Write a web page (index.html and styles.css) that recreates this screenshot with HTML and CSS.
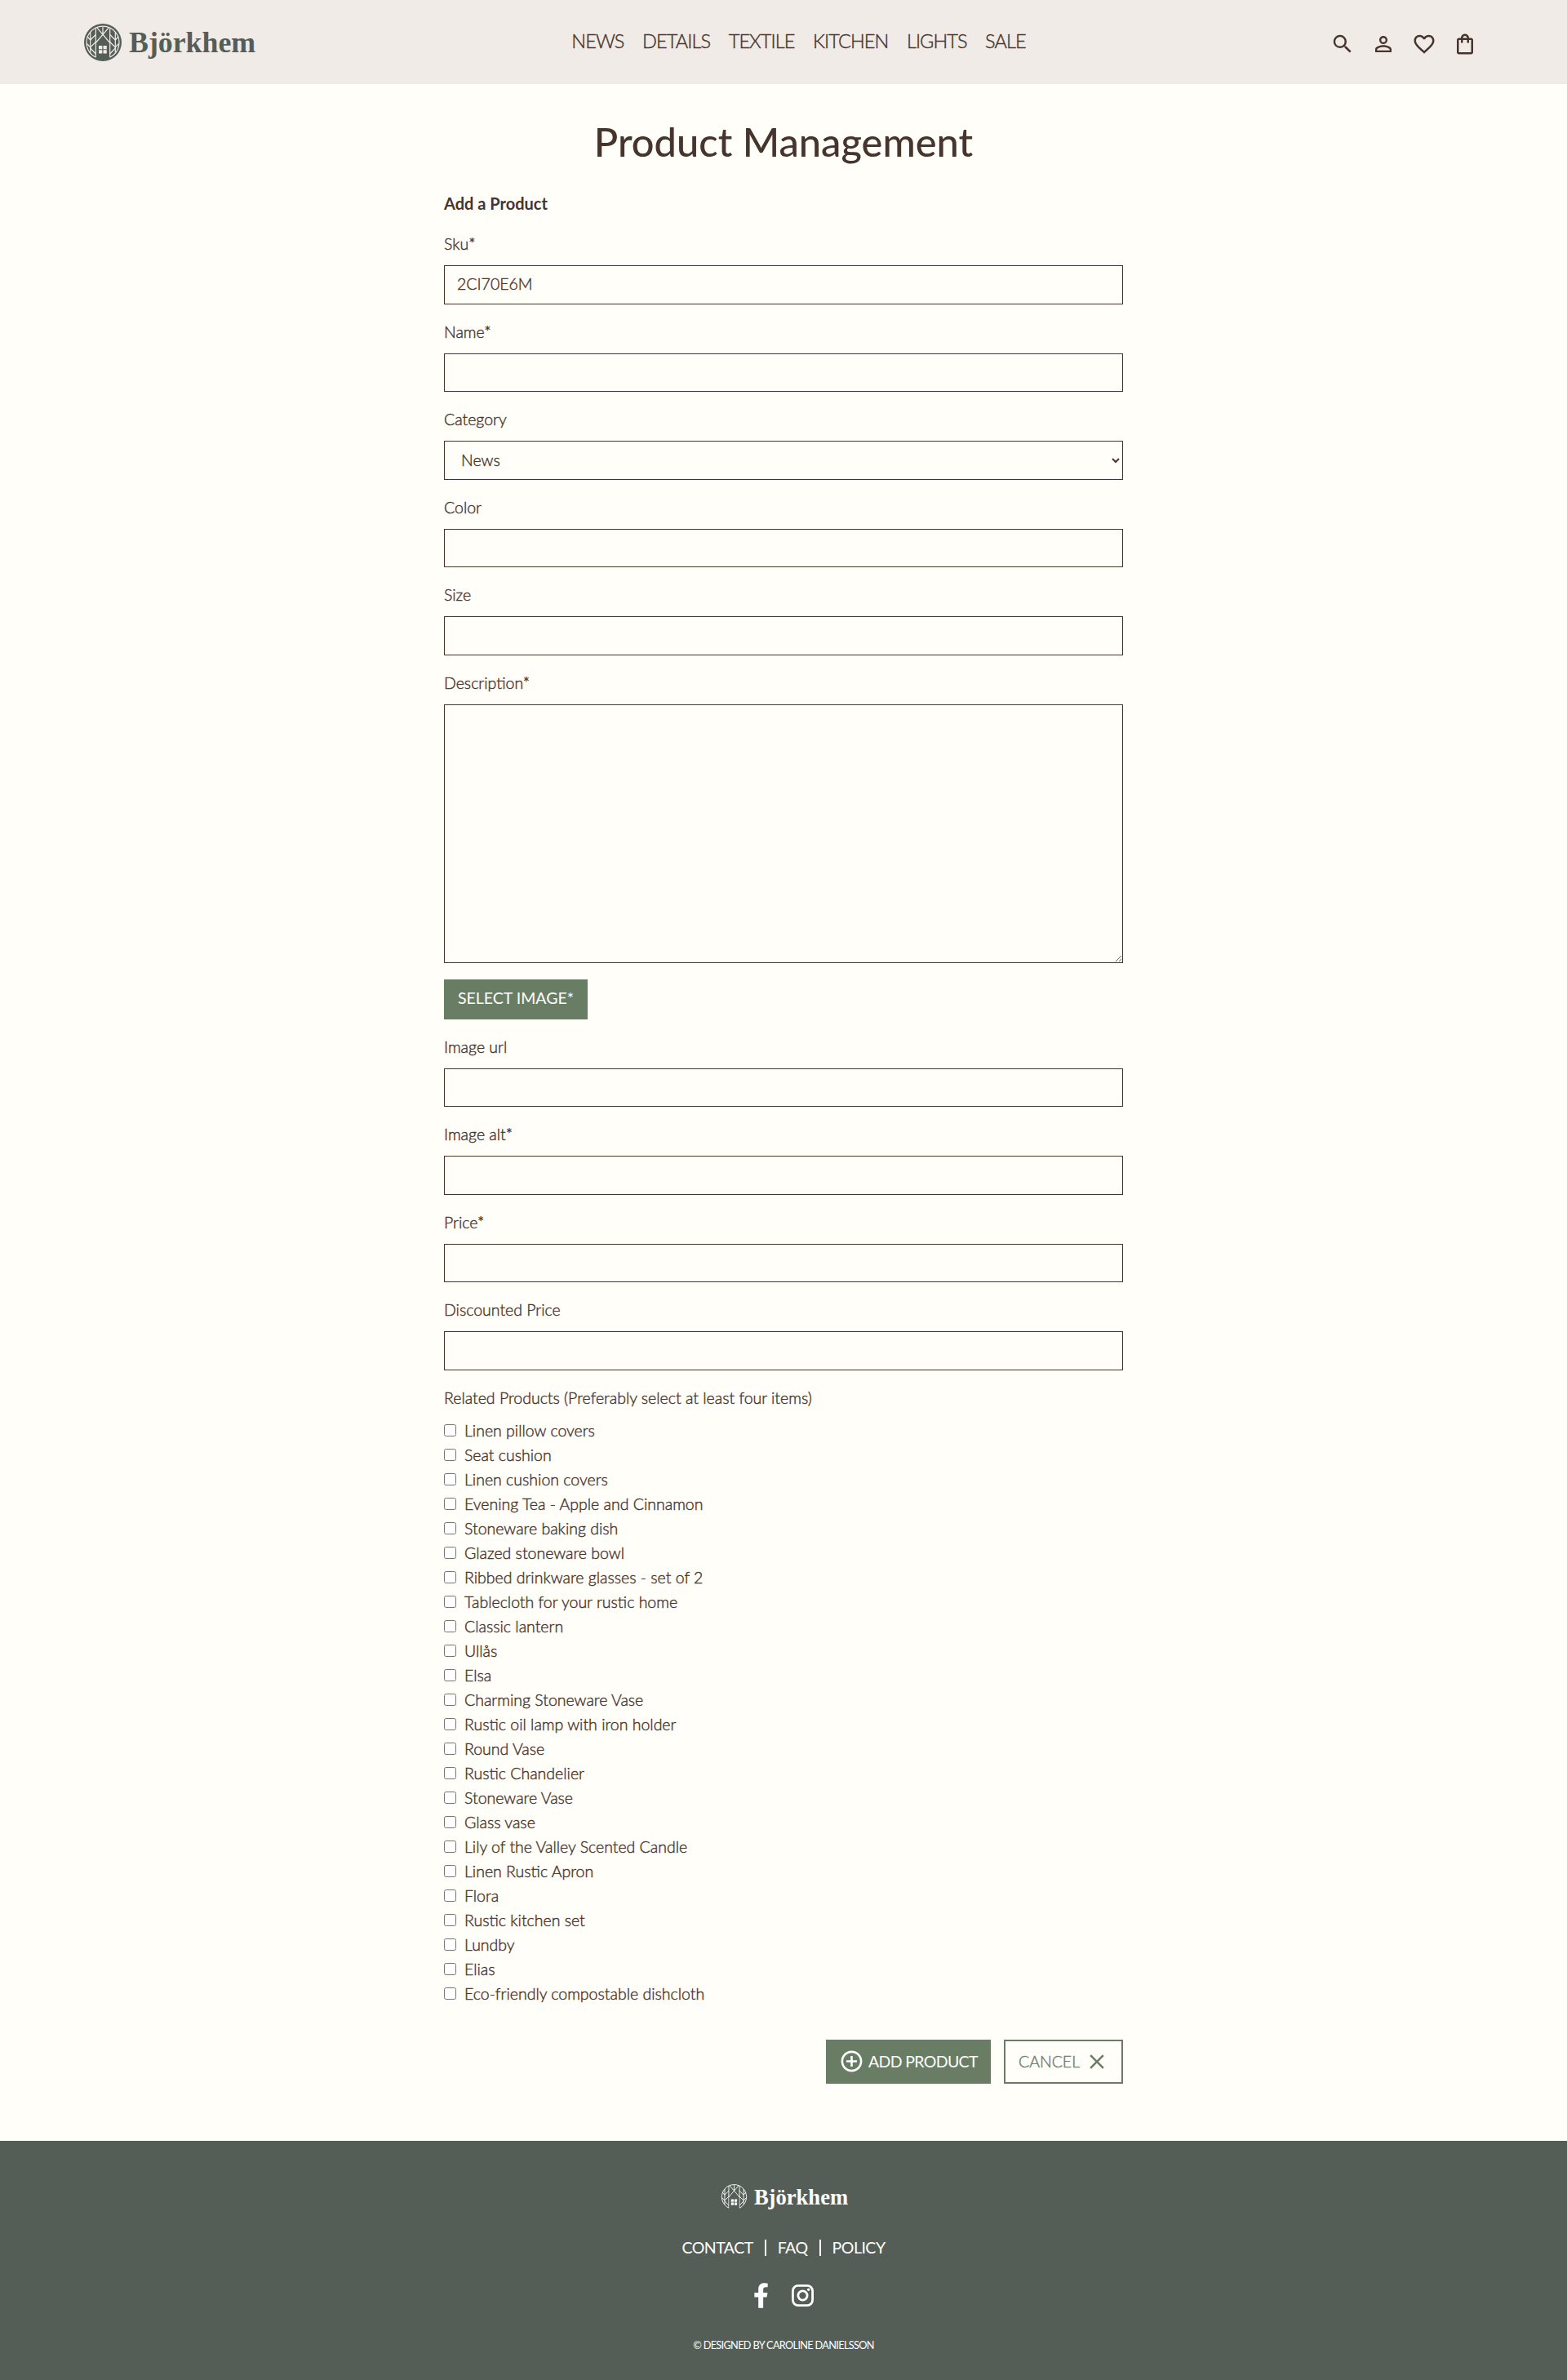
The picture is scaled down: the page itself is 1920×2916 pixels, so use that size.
FILE: index.html
```
<!DOCTYPE html>
<html lang="en">
<head>
<meta charset="utf-8">
<title>Björkhem - Product Management</title>
<link rel="stylesheet" href="styles.css">
</head>
<body>
<svg class="sprite" width="0" height="0" aria-hidden="true">
  <symbol id="emblem" viewBox="0 0 46 46">
    <g fill="none" stroke="currentColor" stroke-width="1.2">
      <path d="M14.300 41.200A20 20 0 1 1 31.700 41.200"/>
      <path d="M14.300 5.400V41M31.700 5.400V41M7.700 10.500V35.500M38.300 10.500V35.500"/>
      <path d="M23 4V13M16 5.200L31.700 23.500M30 5.200L14.300 23.500"/>
      <path d="M14.300 13.500L7.700 20L3.800 15.500M31.700 13.500L38.300 20L42.200 15.500M14.300 22.500L7.700 29L3.500 24.500M31.700 22.500L38.300 29L42.500 24.500M7.700 30L14.300 37M38.300 30L31.700 37"/>
    </g>
    <path fill="#545e56" d="M23 15L31 24.500V41H15V24.500z"/>
    <path fill="currentColor" d="M18 27h4.300v4.200h-4.300zM23.500 27h4.300v4.200h-4.300zM18 32.300h4.300v4.200h-4.300zM23.500 32.300h4.300v4.200h-4.300z"/>
  </symbol>
</svg>

<header class="header">
  <a class="logo"><svg class="logo-mark"><use href="#emblem"/></svg><span>Björkhem</span></a>
  <nav class="nav"><a>NEWS</a><a>DETAILS</a><a>TEXTILE</a><a>KITCHEN</a><a>LIGHTS</a><a>SALE</a></nav>
  <div class="tools">
    <svg viewBox="0 0 24 24"><path d="M15.5 14h-.79l-.28-.27A6.47 6.47 0 0 0 16 9.5 6.5 6.5 0 1 0 9.5 16c1.61 0 3.09-.59 4.23-1.57l.27.28v.79l5 4.99L20.49 19l-4.99-5zm-6 0C7.01 14 5 11.99 5 9.5S7.01 5 9.5 5 14 7.01 14 9.5 11.99 14 9.5 14z"/></svg>
    <svg viewBox="0 0 24 24"><path d="M12 5.9a2.1 2.1 0 1 1 0 4.2 2.1 2.1 0 0 1 0-4.2m0 9c2.97 0 6.1 1.46 6.1 2.1v1.1H5.900V17c0-.64 3.130-2.100 6.100-2.100M12 4C9.790 4 8 5.790 8 8s1.790 4 4 4 4-1.790 4-4-1.790-4-4-4zm0 9c-2.670 0-8 1.340-8 4v3h16v-3c0-2.660-5.330-4-8-4z"/></svg>
    <svg viewBox="0 0 24 24"><path d="M16.5 3c-1.74 0-3.41.81-4.5 2.090C10.910 3.810 9.240 3 7.500 3 4.420 3 2 5.420 2 8.500c0 3.780 3.400 6.860 8.550 11.540L12 21.350l1.450-1.320C18.600 15.360 22 12.280 22 8.500 22 5.420 19.580 3 16.500 3zm-4.400 15.550l-.1.1-.1-.1C7.140 14.240 4 11.390 4 8.500 4 6.500 5.500 5 7.500 5c1.540 0 3.040.990 3.570 2.360h1.870C13.460 5.990 14.960 5 16.500 5c2 0 3.500 1.500 3.500 3.500 0 2.890-3.140 5.740-7.900 10.050z"/></svg>
    <svg viewBox="0 0 24 24"><path d="M18 6h-2c0-2.210-1.790-4-4-4S8 3.790 8 6H6c-1.100 0-2 .9-2 2v12c0 1.100.9 2 2 2h12c1.100 0 2-.9 2-2V8c0-1.100-.9-2-2-2zm-6-2c1.100 0 2 .9 2 2h-4c0-1.100.9-2 2-2zm6 16H6V8h2v2c0 .55.45 1 1 1s1-.45 1-1V8h4v2c0 .55.45 1 1 1s1-.45 1-1V8h2v12z"/></svg>
  </div>
</header>

<main class="main">
  <h1 class="title">Product Management</h1>
  <form class="form">
    <h2 class="subtitle">Add a Product</h2>
    <label class="field"><span>Sku*</span><input type="text" value="2CI70E6M"></label>
    <label class="field"><span>Name*</span><input type="text"></label>
    <label class="field"><span>Category</span><select><option>News</option></select></label>
    <label class="field"><span>Color</span><input type="text"></label>
    <label class="field"><span>Size</span><input type="text"></label>
    <label class="field"><span>Description*</span><textarea></textarea></label>
    <button type="button" class="btn btn-image">SELECT IMAGE*</button>
    <label class="field"><span>Image url</span><input type="text"></label>
    <label class="field"><span>Image alt*</span><input type="text"></label>
    <label class="field"><span>Price*</span><input type="text"></label>
    <label class="field"><span>Discounted Price</span><input type="text"></label>
    <p class="related">Related Products (Preferably select at least four items)</p>
    <div class="checks">
      <label><input type="checkbox">Linen pillow covers</label>
      <label><input type="checkbox">Seat cushion</label>
      <label><input type="checkbox">Linen cushion covers</label>
      <label><input type="checkbox">Evening Tea - Apple and Cinnamon</label>
      <label><input type="checkbox">Stoneware baking dish</label>
      <label><input type="checkbox">Glazed stoneware bowl</label>
      <label><input type="checkbox">Ribbed drinkware glasses - set of 2</label>
      <label><input type="checkbox">Tablecloth for your rustic home</label>
      <label><input type="checkbox">Classic lantern</label>
      <label><input type="checkbox">Ullås</label>
      <label><input type="checkbox">Elsa</label>
      <label><input type="checkbox">Charming Stoneware Vase</label>
      <label><input type="checkbox">Rustic oil lamp with iron holder</label>
      <label><input type="checkbox">Round Vase</label>
      <label><input type="checkbox">Rustic Chandelier</label>
      <label><input type="checkbox">Stoneware Vase</label>
      <label><input type="checkbox">Glass vase</label>
      <label><input type="checkbox">Lily of the Valley Scented Candle</label>
      <label><input type="checkbox">Linen Rustic Apron</label>
      <label><input type="checkbox">Flora</label>
      <label><input type="checkbox">Rustic kitchen set</label>
      <label><input type="checkbox">Lundby</label>
      <label><input type="checkbox">Elias</label>
      <label><input type="checkbox">Eco-friendly compostable dishcloth</label>
    </div>
    <div class="actions">
      <button type="button" class="btn btn-add"><svg viewBox="0 0 24 24"><path d="M13 7h-2v4H7v2h4v4h2v-4h4v-2h-4V7zm-1-5C6.480 2 2 6.480 2 12s4.480 10 10 10 10-4.480 10-10S17.520 2 12 2zm0 18c-4.410 0-8-3.590-8-8s3.590-8 8-8 8 3.590 8 8-3.590 8-8 8z"/></svg>ADD PRODUCT</button>
      <button type="button" class="btn btn-cancel">CANCEL<svg viewBox="0 0 24 24"><path d="M19 6.410L17.590 5 12 10.590 6.410 5 5 6.410 10.590 12 5 17.590 6.410 19 12 13.410 17.590 19 19 17.590 13.410 12z"/></svg></button>
    </div>
  </form>
</main>

<footer class="footer">
  <a class="footer-logo"><svg><use href="#emblem"/></svg><span>Björkhem</span></a>
  <div class="footer-links"><a>CONTACT</a><i></i><a>FAQ</a><i></i><a>POLICY</a></div>
  <div class="social">
    <svg class="fb" viewBox="0 0 320 512"><path d="M279.140 288l14.220-92.660h-88.910v-60.130c0-25.350 12.420-50.060 52.240-50.060h40.420V6.260S260.430 0 225.360 0c-73.220 0-121.080 44.380-121.080 124.720v70.620H22.890V288h81.390v224h100.170V288z"/></svg>
    <svg class="ig" viewBox="0 0 27 27"><rect x="1.400" y="1.400" width="24.200" height="24.200" rx="6.500"/><circle cx="13.500" cy="13.500" r="5.600"/><circle class="dot" cx="20.700" cy="6.300" r="1.700"/></svg>
  </div>
  <p class="copy">© DESIGNED BY CAROLINE DANIELSSON</p>
</footer>
</body>
</html>
```
FILE: styles.css
```
* { box-sizing: border-box; }

body {
  margin: 0;
  background: #fffef9;
  color: #47342d;
  font: 300 19.5px/30px "Lato", sans-serif;
  -webkit-text-stroke: 0.4px currentColor;
}

.sprite { display: block; position: absolute; }

.header {
  display: flex;
  justify-content: space-between;
  align-items: center;
  height: 103px;
  padding: 0 110px 0 103px;
  background: #f0ebe6;
}

.logo, .footer-logo {
  display: flex;
  align-items: center;
  font-family: "Liberation Serif", serif;
  font-weight: 700;
  -webkit-text-stroke: 0;
}
.logo { gap: 9px; color: #545e56; font-size: 35.8px; }
.logo-mark {
  width: 46px;
  height: 46px;
  border-radius: 50%;
  background: #545e56;
  color: #f0ebe6;
}

.nav {
  display: flex;
  gap: 22.5px;
  margin: 0 0 3px 14px;
  font-size: 23.5px;
  letter-spacing: -0.9px;
}

.tools { display: flex; gap: 20px; padding-top: 5px; }
.tools svg { width: 30px; height: 30px; fill: #47342d; }

.main { height: 2520px; padding-top: 40px; }
.title {
  margin: 0;
  text-align: center;
  font-size: 48.8px;
  font-weight: 500;
  line-height: 60px;
  -webkit-text-stroke: 0;
}

.form { width: 832px; margin: 31px auto 0; }
.subtitle {
  margin: 0 0 21px;
  font-size: 20px;
  line-height: 30px;
  -webkit-text-stroke: 0;
}

.field { display: block; margin-bottom: 20px; }
.field span { display: block; height: 40px; line-height: 27px; }
.field input, .field select, .field textarea {
  display: block;
  width: 100%;
  height: 47.5px;
  border: 1px solid #47342d;
  border-radius: 0;
  background: transparent;
  color: inherit;
  font: inherit;
}
.field input { padding: 0 15px 3px; }
.field select { padding: 0 3px 0 16px; }
.field textarea { height: 317px; }

.btn {
  display: flex;
  align-items: center;
  border: 0;
  font: 400 19.5px/30px "Lato", sans-serif;
  background: #697d65;
  color: #fff;
}
.btn svg { fill: currentColor; }
.btn-image { width: 176px; height: 49px; margin-bottom: 20px; padding: 0 0 3px 17px; -webkit-text-stroke: 0; }

.related { margin: 0 0 11px; line-height: 27px; }
.checks label { display: flex; height: 30px; gap: 10px; line-height: 32px; }
.checks input { width: 15px; height: 15px; margin: 8px 0 0; }

.actions { display: flex; justify-content: flex-end; gap: 16px; margin-top: 42px; }
.actions .btn { height: 54px; -webkit-text-stroke: 0; }
.btn-add { width: 202px; gap: 5px; padding: 0 0 0 16px; letter-spacing: -0.65px; }
.btn-add svg { width: 31px; height: 31px; flex: none; }
.actions .btn-cancel {
  width: 146px;
  gap: 6px;
  padding: 0 0 0 16px;
  border: 2px solid #697d65;
  background: transparent;
  color: #697d65;
  font-weight: 300;
  -webkit-text-stroke: 0.4px currentColor;
}
.btn-cancel svg { width: 30px; height: 30px; flex: none; }

.footer {
  display: flex;
  flex-direction: column;
  align-items: center;
  height: 293px;
  padding-top: 53px;
  background: #545e56;
  color: #fff;
  font-weight: 400;
  -webkit-text-stroke: 0;
}
.footer-logo { gap: 9px; height: 31px; margin-left: 3px; font-size: 26.6px; }
.footer-logo svg { width: 31px; height: 31px; transform: scale(1.12); }
.footer-links { display: flex; align-items: center; gap: 14px; margin-top: 32px; letter-spacing: -0.5px; }
.footer-links i { width: 2px; height: 20px; background: #fff; }
.social { display: flex; align-items: center; gap: 28px; height: 32px; margin-top: 27px; }
.fb { width: 19px; height: 31px; fill: #fff; }
.ig { width: 27px; height: 27px; fill: none; stroke: #fff; stroke-width: 2.8; }
.ig .dot { fill: #fff; stroke: none; }
.copy { margin: 30px 0 0; font-size: 12.7px; letter-spacing: -0.65px; }
```
